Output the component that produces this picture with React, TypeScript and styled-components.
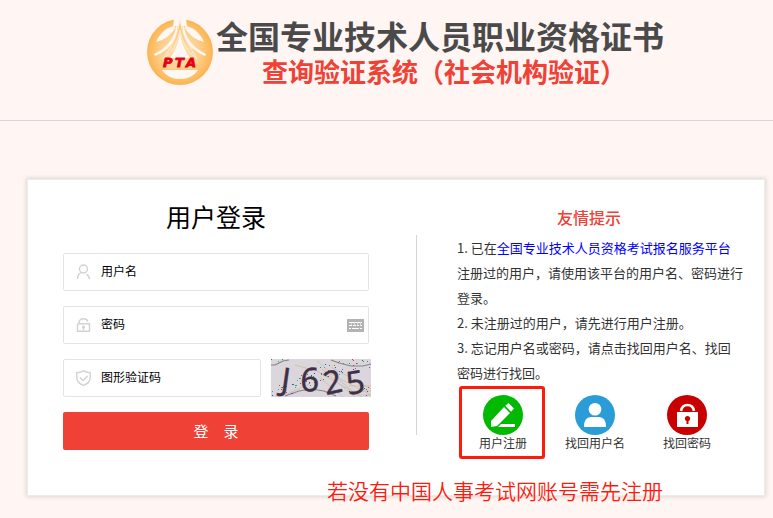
import React from "react";
import styled, { createGlobalStyle } from "styled-components";

const GlobalStyle = createGlobalStyle`
  * { box-sizing: border-box; }
  body {
    margin: 0;
    background: #fff5f2;
    color: #333;
    font-family: "Noto Sans CJK SC", sans-serif;
    font-size: 13px;
  }
`;

const Page = styled.div`
  padding-bottom: 22px;
`;

const Header = styled.header`
  display: flex;
  justify-content: center;
  align-items: center;
  gap: 3px;
  padding: 15px 0 31px 38px;
  border-bottom: 1px solid #d9d6d4;
`;

const Titles = styled.h1`
  margin: 2px 0 0;
  text-align: center;
  white-space: nowrap;
`;

const SystemName = styled.span`
  display: block;
  font-size: 32px;
  font-weight: 700;
  line-height: 36px;
  color: #4a4a4a;
`;

const SystemSubtitle = styled.span`
  display: block;
  padding-left: 8px;
  font-size: 26px;
  font-weight: 700;
  line-height: 36px;
  color: #ef4136;
`;

const Card = styled.main`
  position: relative;
  display: grid;
  grid-template-columns: 388fr 1px 347fr;
  margin: 58px 8px 0 27px;
  padding-bottom: 44px;
  background: #fff;
  border: 1px solid #eeeceb;
  box-shadow: 0 0 4px 1px #dcd8d4;
`;

const LoginForm = styled.form`
  display: flex;
  flex-direction: column;
  gap: 15px;
  padding: 16px 47px 0 35px;
`;

const FormTitle = styled.h2`
  margin: 0 0 2px;
  text-align: center;
  font-size: 25px;
  font-weight: 400;
  line-height: 40px;
  color: #000;
`;

const Field = styled.div`
  display: flex;
  align-items: center;
  height: 38px;
  min-width: 0;
  padding: 0 4px 0 12px;
  border: 1px solid #e4e4e4;
  border-radius: 2px;
  background: #fff;
`;

const FieldLabel = styled.label`
  display: flex;
  margin-right: 10px;
`;

const TextInput = styled.input`
  flex: 1;
  min-width: 0;
  height: 34px;
  padding: 0 0 3px;
  border: 0;
  outline: 0;
  background: transparent;
  font-family: inherit;
  font-size: 12px;
  color: #000;
  &::placeholder {
    color: #000;
    opacity: 1;
  }
`;

const PlainButton = styled.button`
  display: flex;
  padding: 0;
  border: 0;
  background: none;
  cursor: pointer;
`;

const CodeRow = styled.div`
  display: grid;
  grid-template-columns: 1fr 100px;
  gap: 10px;
  margin-right: -2px;
`;

const SubmitButton = styled.button`
  height: 38px;
  padding: 0 0 2px;
  border: 0;
  border-radius: 2px;
  background: #ef4136;
  color: #fff;
  font-family: inherit;
  font-size: 15px;
  cursor: pointer;
`;

const Divider = styled.div`
  height: 200px;
  margin-top: 55px;
  background: #d5d5d5;
`;

const Tips = styled.section`
  padding: 25px 19px 0 40px;
`;

const TipsTitle = styled.h3`
  margin: 0 24px 6px 0;
  text-align: center;
  font-size: 16px;
  font-weight: 500;
  line-height: 24px;
  color: #ef4136;
`;

const TipLine = styled.p`
  margin: 0;
  line-height: 25px;
  white-space: nowrap;
`;

const TipLink = styled.a`
  color: #00f;
  text-decoration: none;
`;

const Actions = styled.nav`
  display: grid;
  grid-template-columns: repeat(3, 1fr);
  margin: 10px 12px 0 0;
`;

const Action = styled.a<{ $marked?: boolean }>`
  position: relative;
  display: flex;
  flex-direction: column;
  align-items: center;
  color: #333;
  font-size: 12px;
  line-height: 16px;
  text-decoration: none;
  white-space: nowrap;
  &::after {
    content: "";
    display: ${(p) => (p.$marked ? "block" : "none")};
    position: absolute;
    inset: -9px 4px -8px 2px;
    border: 3px solid #ff1a0e;
    border-radius: 3px;
  }
`;

const Note = styled.p`
  position: absolute;
  left: 299px;
  bottom: -10px;
  margin: 0;
  font-size: 21px;
  font-weight: 350;
  line-height: 30px;
  color: #ff1a0e;
  white-space: nowrap;
`;

function Logo() {
  return (
    <svg width="66" height="66" viewBox="0 0 66 66" role="img" aria-label="PTA">
      <defs>
        <radialGradient id="gold">
          <stop offset="0" stopColor="#ffe3b8" />
          <stop offset="0.6" stopColor="#fdcf8c" />
          <stop offset="1" stopColor="#fbb450" />
        </radialGradient>
        <linearGradient id="spire" x1="0" y1="0" x2="0" y2="1">
          <stop offset="0" stopColor="#fbc070" />
          <stop offset="1" stopColor="#fee0b4" />
        </linearGradient>
      </defs>
      <circle cx="33" cy="33" r="33" fill="url(#gold)" />
      <g fill="#fff7f2">
        <path d="M27 0h12l1 7H26z" />
        <path d="M26 7Q14 11 9 23Q22 20 29 8zM40 7Q52 11 57 23Q44 20 37 8z" />
        <path d="M29 8Q26 26 7 35l1 2Q15 34 21 29 30 20 31 6zM37 8Q40 26 59 35l-1 2Q51 34 45 29 36 20 35 6z" />
      </g>
      <path
        d="M33 0Q34 11 38 19T50 40Q37 32 33 11 29 32 16 40 24 29 28 19T33 0z"
        fill="url(#spire)"
        stroke="#fff7f2"
        strokeWidth="0.6"
      />
      <path d="M33 12Q34 27 43 39H23Q32 27 33 12z" fill="#fff7f2" />
      <path d="M15 51h36Q45 60 33 60T15 51z" fill="#fff7f2" />
      <g fontFamily="DejaVu Sans" fontWeight="700" fontStyle="oblique" fontSize="13">
        <text x="16 28 39" y="48" fill="#e60012" stroke="#e60012" strokeWidth="0.8">PTA</text>
      </g>
      <path d="M15 50.5h37" stroke="#fbc879" />
    </svg>
  );
}

const outline = { fill: "none", stroke: "#d2d2d2", strokeWidth: 1.4 };

function UserOutline() {
  return (
    <svg width="15" height="16" viewBox="0 0 15 16" {...outline}>
      <circle cx="7.5" cy="5" r="4" />
      <path d="M5 8.6Q1.6 10.5 1.4 15M10.3 10.4Q13.4 11.6 13.4 15" />
    </svg>
  );
}

function LockOutline() {
  return (
    <svg width="15" height="16" viewBox="0 0 15 16" {...outline}>
      <path d="M2 6.7h11.5v7.6h-12V6.7M3 6.5Q3 1.7 7.5 1.7q3.5 0 4.3 2.8" />
      <path d="M7.5 10v3" />
      <circle cx="7.5" cy="10" r="0.9" fill="#d2d2d2" />
    </svg>
  );
}

function ShieldOutline() {
  return (
    <svg width="15" height="16" viewBox="0 0 15 16" {...outline}>
      <path d="M7.5.8Q10 2.4 14.2 2.8V8q0 4.8-6.7 7.3Q.8 12.8.8 8V2.8Q5 2.4 7.5.8z" />
      <path d="M4 7.5l3 3 4.6-4.6" />
    </svg>
  );
}

function KeyboardIcon() {
  return (
    <svg width="17" height="13" viewBox="0 0 17 13">
      <path fill="#b3b3b3" d="M0 0h17v13H0z" />
      <path fill="none" stroke="#fff" d="M2 3.5h13M2 6.5h3m1 0h3m1 0h2m1 0h2M2 9.5h2m1 0h7m1 0h2" />
      <path fill="none" stroke="#e8e8e8" d="M4.5 3v4M7.5 3v4M10.5 3v4M13.5 3v4" strokeWidth="0.7" />
    </svg>
  );
}

const dotColors = ["#18a058", "#3848d8", "#d82848", "#20b8c8", "#8a48ba", "#18c818", "#e04820"];
const dots = Array.from({ length: 90 }, (_, i) => ({
  x: (i * 37 + ((i * i) % 13)) % 99,
  y: (i * 23 + ((i * i) % 7)) % 37,
  color: dotColors[(i * 5) % 7],
}));

function Captcha() {
  return (
    <svg width="100" height="38" viewBox="0 0 100 38" role="img" aria-label="J625">
      <path fill="#dbd6db" d="M0 0h100v38H0z" />
      <g fill="none" stroke="#cdc3b2">
        <path d="M14 36L38 25M24 6l22 6 45 26M46 2l40 34M51 10l33 28M48 18l24 20M54 12l46 24M60 8l40 22" />
        <path d="M78 27h22M82 32h18M85 36h15" />
      </g>
      <path
        d="M0 6h4L12 2l6-1M60 1l8 3 12 3h12l8-2M14 37l14-5 12-2 13 2 12 5"
        fill="none"
        stroke="#87848a"
        strokeWidth="1.2"
      />
      {dots.map((d, i) => (
        <path key={i} d={`M${d.x} ${d.y}h1v1h-1z`} fill={d.color} shapeRendering="crispEdges" />
      ))}
      <g fill="#403047" stroke="#403047" strokeWidth="0.4" fontFamily="Noto Sans">
        <text x="9" y="31" rotate="8" fontSize="32">J</text>
        <text x="29" y="32" rotate="2" fontSize="33">6</text>
        <text x="55" y="36" rotate="-12" fontSize="32">2</text>
        <text x="77" y="36" rotate="-9" fontSize="32">5</text>
      </g>
    </svg>
  );
}

function RegisterIcon() {
  return (
    <svg width="40" height="40" viewBox="0 0 40 40">
      <circle cx="20" cy="20" r="20" fill="#00b900" />
      <path fill="#fff" d="M8 32v-6L21 12l6 6-13 13zM22.3 10.7L25.5 8l5.5 5.5-3 3.3zM18 29h14v3H15z" />
    </svg>
  );
}

function AccountIcon() {
  return (
    <svg width="40" height="40" viewBox="0 0 40 40">
      <circle cx="20" cy="20" r="20" fill="#2a9dd8" />
      <circle cx="20" cy="14.3" r="6.3" fill="#fff" />
      <path fill="#fff" d="M9 32q0-10 7-10h8q7 0 7 10z" />
    </svg>
  );
}

function PasswordIcon() {
  return (
    <svg width="40" height="40" viewBox="0 0 40 40">
      <circle cx="20" cy="20" r="20" fill="#c80000" />
      <path fill="#fff" d="M10 17h21v15H10z" />
      <path d="M14 16q1-6 6.5-6t6.5 6" fill="none" stroke="#fff" strokeWidth="2.6" />
      <circle cx="20.5" cy="23.5" r="2.6" fill="#c80000" />
      <path fill="#c80000" d="M19.5 24h2v5h-2z" />
    </svg>
  );
}

export default function App() {
  return (
    <Page>
      <GlobalStyle />
      <Header>
        <Logo />
        <Titles>
          <SystemName>全国专业技术人员职业资格证书</SystemName>
          <SystemSubtitle>查询验证系统（社会机构验证）</SystemSubtitle>
        </Titles>
      </Header>
      <Card>
        <LoginForm onSubmit={(e) => e.preventDefault()}>
          <FormTitle>用户登录</FormTitle>
          <Field>
            <FieldLabel htmlFor="username" aria-label="用户名"><UserOutline /></FieldLabel>
            <TextInput id="username" placeholder="用户名" />
          </Field>
          <Field>
            <FieldLabel htmlFor="password" aria-label="密码"><LockOutline /></FieldLabel>
            <TextInput id="password" type="password" placeholder="密码" />
            <PlainButton type="button" aria-label="键盘"><KeyboardIcon /></PlainButton>
          </Field>
          <CodeRow>
            <Field>
              <FieldLabel htmlFor="code" aria-label="图形验证码"><ShieldOutline /></FieldLabel>
              <TextInput id="code" placeholder="图形验证码" />
            </Field>
            <PlainButton type="button"><Captcha /></PlainButton>
          </CodeRow>
          <SubmitButton type="submit">登　录</SubmitButton>
        </LoginForm>
        <Divider />
        <Tips>
          <TipsTitle>友情提示</TipsTitle>
          <TipLine>
            1. 已在<TipLink href="#">全国专业技术人员资格考试报名服务平台</TipLink>
            <br />注册过的用户，请使用该平台的用户名、密码进行
            <br />登录。
          </TipLine>
          <TipLine>2. 未注册过的用户，请先进行用户注册。</TipLine>
          <TipLine>
            3. 忘记用户名或密码，请点击找回用户名、找回
            <br />密码进行找回。
          </TipLine>
          <Actions>
            <Action href="#" $marked><RegisterIcon />用户注册</Action>
            <Action href="#"><AccountIcon />找回用户名</Action>
            <Action href="#"><PasswordIcon />找回密码</Action>
          </Actions>
        </Tips>
        <Note>若没有中国人事考试网账号需先注册</Note>
      </Card>
    </Page>
  );
}
